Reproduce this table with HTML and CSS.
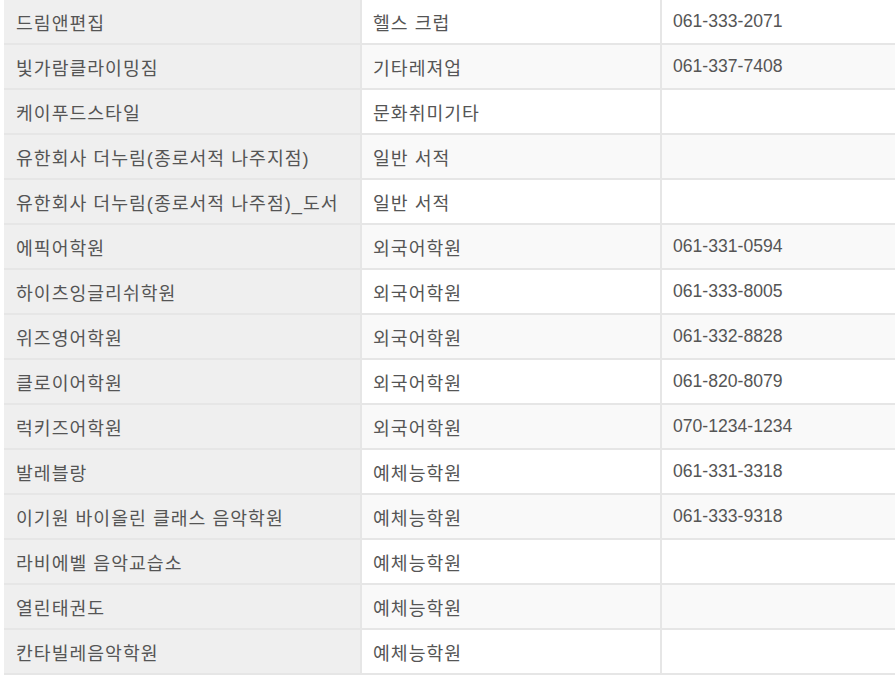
FILE: index.html
```html
<!DOCTYPE html>
<html lang="ko">
<head>
<meta charset="utf-8">
<title>업체 목록</title>
<link rel="stylesheet" href="styles.css">
</head>
<body>
<div class="list">
  <div class="row"><div class="cell name">드림앤편집</div><div class="cell">헬스 크럽</div><div class="cell tel">061-333-2071</div></div>
  <div class="row"><div class="cell name">빛가람클라이밍짐</div><div class="cell">기타레져업</div><div class="cell tel">061-337-7408</div></div>
  <div class="row"><div class="cell name">케이푸드스타일</div><div class="cell">문화취미기타</div><div class="cell tel"></div></div>
  <div class="row"><div class="cell name">유한회사 더누림(종로서적 나주지점)</div><div class="cell">일반 서적</div><div class="cell tel"></div></div>
  <div class="row"><div class="cell name">유한회사 더누림(종로서적 나주점)_도서</div><div class="cell">일반 서적</div><div class="cell tel"></div></div>
  <div class="row"><div class="cell name">에픽어학원</div><div class="cell">외국어학원</div><div class="cell tel">061-331-0594</div></div>
  <div class="row"><div class="cell name">하이츠잉글리쉬학원</div><div class="cell">외국어학원</div><div class="cell tel">061-333-8005</div></div>
  <div class="row"><div class="cell name">위즈영어학원</div><div class="cell">외국어학원</div><div class="cell tel">061-332-8828</div></div>
  <div class="row"><div class="cell name">클로이어학원</div><div class="cell">외국어학원</div><div class="cell tel">061-820-8079</div></div>
  <div class="row"><div class="cell name">럭키즈어학원</div><div class="cell">외국어학원</div><div class="cell tel">070-1234-1234</div></div>
  <div class="row"><div class="cell name">발레블랑</div><div class="cell">예체능학원</div><div class="cell tel">061-331-3318</div></div>
  <div class="row"><div class="cell name">이기원 바이올린 클래스 음악학원</div><div class="cell">예체능학원</div><div class="cell tel">061-333-9318</div></div>
  <div class="row"><div class="cell name">라비에벨 음악교습소</div><div class="cell">예체능학원</div><div class="cell tel"></div></div>
  <div class="row"><div class="cell name">열린태권도</div><div class="cell">예체능학원</div><div class="cell tel"></div></div>
  <div class="row"><div class="cell name">칸타빌레음악학원</div><div class="cell">예체능학원</div><div class="cell tel"></div></div>
</div>
</body>
</html>
```
FILE: styles.css
```css
html, body {
  margin: 0;
  padding: 0;
  background: #ffffff;
  overflow: hidden;
}
body {
  font-family: "Liberation Sans", "Noto Sans CJK KR", sans-serif;
  font-size: 18.3px;
  letter-spacing: 1px;
  color: #555555;
}
.list {
  margin-left: 4px;
  width: 891px;
}
.row {
  display: grid;
  grid-template-columns: 356px 300px 1fr;
  height: 45px;
  box-sizing: border-box;
  border-bottom: 2px solid #e6e6e6;
  background: #ffffff;
}
.row:nth-child(even) {
  background: #f9f9f9;
}
.cell {
  display: flex;
  align-items: center;
  padding-left: 11px;
  white-space: nowrap;
  overflow: hidden;
  border-left: 2px solid #e6e6e6;
}
.cell.name {
  border-left: none;
  padding-left: 12px;
  background: #efefef;
}
.cell.tel {
  font-size: 17.6px;
  letter-spacing: 0;
}
```
